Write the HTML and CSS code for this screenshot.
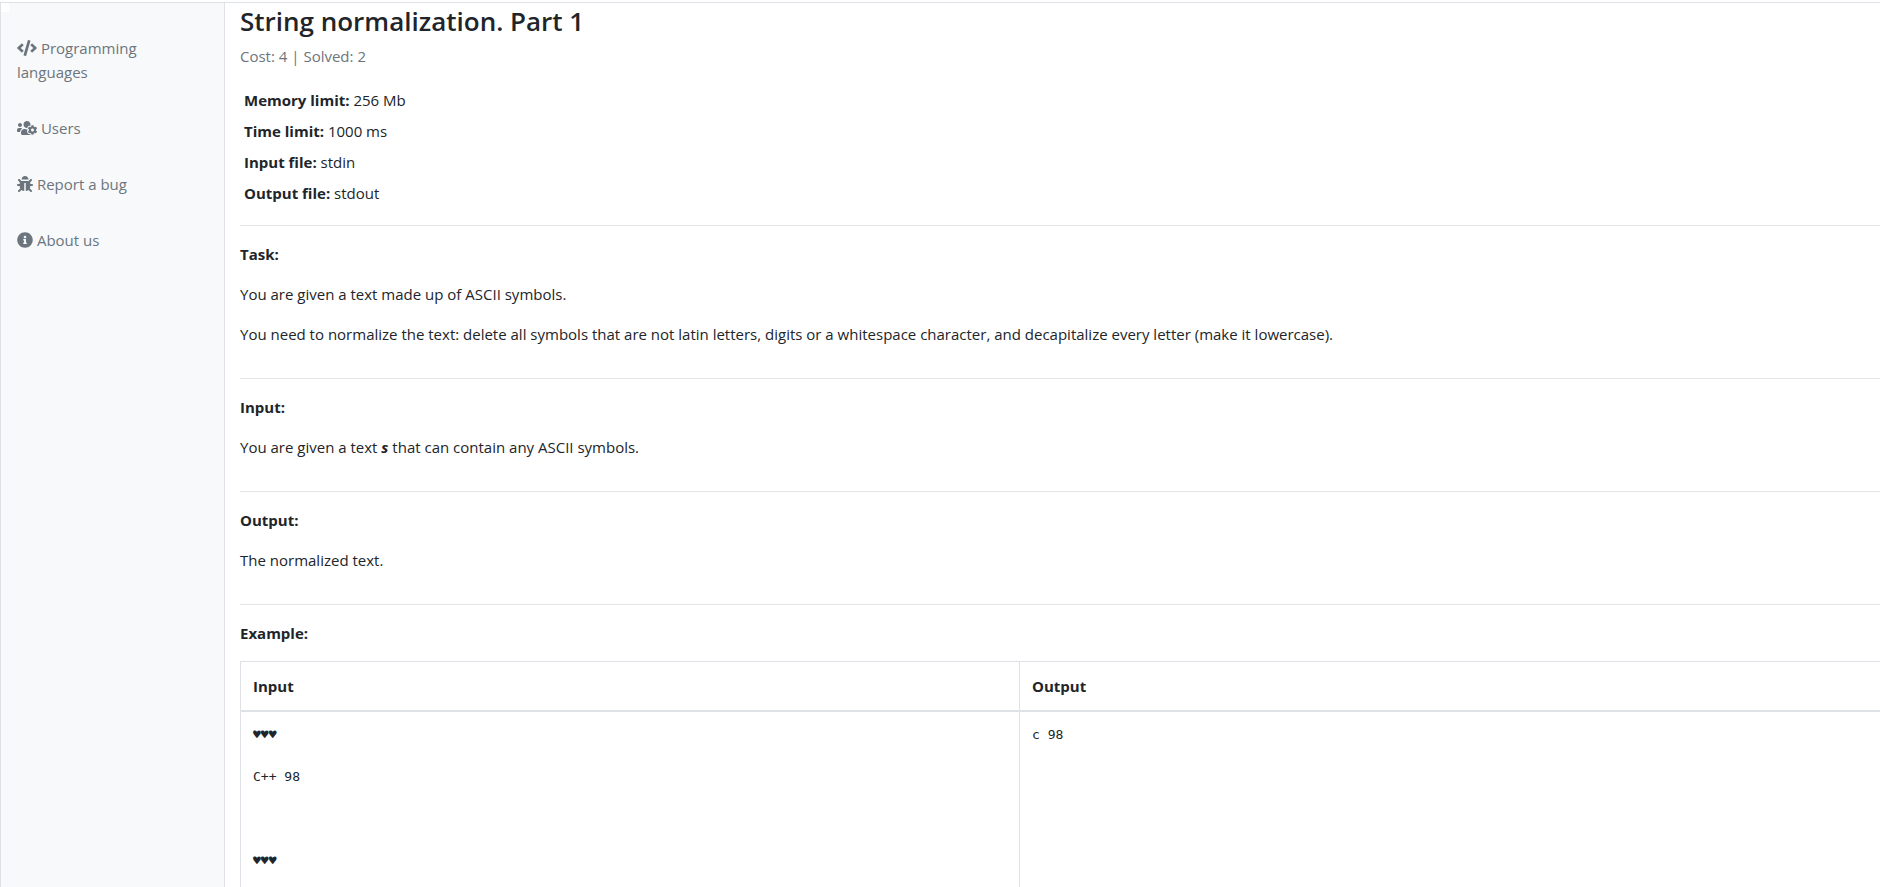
FILE: index.html
```html
<!DOCTYPE html>
<html lang="en">
<head>
    <meta charset="UTF-8">
    <title>String normalization. Part 1</title>
    <link rel="stylesheet" href="styles.css">
</head>
<body>
<div class="wrapper">
    <nav class="sidebar">
        <ul>
            <li>
                <a href="#"><svg class="icon icon-wide" viewBox="0 0 640 512"><path d="M278.9 511.5l-61-17.7c-6.4-1.8-10-8.5-8.2-14.9L346.2 8.7c1.8-6.4 8.5-10 14.9-8.2l61 17.7c6.4 1.8 10 8.5 8.2 14.9L293.8 503.3c-1.9 6.4-8.5 10.1-14.9 8.2zm-114-112.2l43.5-46.4c4.6-4.9 4.3-12.7-.8-17.2L117 256l90.6-79.7c5.1-4.5 5.5-12.3.8-17.2l-43.5-46.4c-4.5-4.8-12.1-5.1-17-.5L3.8 247.2c-5.1 4.7-5.1 12.8 0 17.5l144.1 135.1c4.9 4.6 12.5 4.4 17-.5zm327.2.6l144.1-135.1c5.1-4.7 5.1-12.8 0-17.5L492.1 112.1c-4.8-4.5-12.4-4.3-17 .5L431.6 159c-4.6 4.9-4.3 12.7.8 17.2L523 256l-90.6 79.7c-5.1 4.5-5.5 12.3-.8 17.2l43.5 46.4c4.5 4.9 12.1 5.1 17 .6z"/></svg> Programming languages</a>
            </li>
            <li>
                <a href="#"><svg class="icon icon-wide" viewBox="0 0 640 512"><path d="M610.5 341.3c2.6-14.1 2.6-28.5 0-42.6l25.8-14.9c3-1.7 4.3-5.2 3.3-8.5-6.7-21.6-18.2-41.2-33.2-57.4-2.3-2.5-6-3.1-9-1.4l-25.8 14.9c-10.9-9.3-23.4-16.5-36.9-21.3v-29.8c0-3.4-2.4-6.4-5.7-7.1-22.3-5-45-4.8-66.2 0-3.3.7-5.7 3.7-5.7 7.1v29.8c-13.5 4.8-26 12-36.9 21.3l-25.8-14.9c-2.9-1.7-6.7-1.1-9 1.4-15 16.2-26.5 35.8-33.2 57.4-1 3.3.4 6.8 3.3 8.5l25.8 14.9c-2.6 14.1-2.6 28.5 0 42.6l-25.8 14.9c-3 1.7-4.3 5.2-3.3 8.5 6.7 21.6 18.2 41.1 33.2 57.4 2.3 2.5 6 3.1 9 1.4l25.8-14.9c10.9 9.3 23.4 16.5 36.9 21.3v29.8c0 3.4 2.4 6.4 5.7 7.1 22.3 5 45 4.8 66.2 0 3.3-.7 5.7-3.7 5.7-7.1v-29.8c13.5-4.8 26-12 36.9-21.3l25.8 14.9c2.9 1.7 6.7 1.1 9-1.4 15-16.2 26.5-35.8 33.2-57.4 1-3.3-.4-6.8-3.3-8.5l-25.8-14.9zM496 368.5c-26.8 0-48.5-21.8-48.5-48.5s21.8-48.5 48.5-48.5 48.5 21.8 48.5 48.5-21.7 48.5-48.5 48.5zM96 224c35.3 0 64-28.7 64-64s-28.7-64-64-64-64 28.7-64 64 28.7 64 64 64zm224 32c1.9 0 3.7-.5 5.6-.6 8.3-21.7 20.5-42.1 36.3-59.2 7.4-8 17.9-12.6 28.9-12.6 6.9 0 13.7 1.8 19.6 5.3l7.9 4.6c.8-.5 1.6-.9 2.4-1.4 7-14.6 11.2-30.8 11.2-48 0-61.9-50.1-112-112-112S208 82.1 208 144c0 61.9 50.1 112 112 112zm105.2 194.5c-2.3-1.2-4.6-2.6-6.8-3.9-8.2 4.8-15.3 9.8-27.5 9.8-10.9 0-21.4-4.6-28.9-12.6-18.3-19.8-32.3-43.9-40.2-69.6-10.7-34.5 24.9-49.7 25.8-50.3-.1-2.6-.1-5.2 0-7.8l-7.9-4.6c-3.8-2.2-7-5-9.8-8.1-3.3.2-6.5.6-9.8.6-24.6 0-47.6-6-68.5-16h-8.3C179.6 288 128 339.6 128 403.2V432c0 26.5 21.5 48 48 48h255.4c-3.7-6-6.2-12.8-6.2-20.3v-9.2zM173.1 274.6C161.5 263.1 145.6 256 128 256H64c-35.3 0-64 28.7-64 64v32c0 17.7 14.3 32 32 32h65.9c6.3-47.4 34.9-87.3 75.2-109.4z"/></svg> Users</a>
            </li>
            <li>
                <a href="#"><svg class="icon" viewBox="0 0 512 512"><path d="M511.988 288.9c-.478 17.43-15.217 31.1-32.653 31.1H424v16c0 21.864-4.882 42.584-13.6 61.145l60.228 60.228c12.496 12.497 12.496 32.758 0 45.255-12.498 12.497-32.759 12.496-45.256 0l-54.736-54.736C345.886 467.965 314.351 480 280 480V236c0-6.627-5.373-12-12-12h-24c-6.627 0-12 5.373-12 12v244c-34.351 0-65.886-12.035-90.636-32.108l-54.736 54.736c-12.498 12.497-32.759 12.496-45.256 0-12.496-12.497-12.496-32.758 0-45.255l60.228-60.228C92.882 378.584 88 357.864 88 336v-16H32.666C15.23 320 .491 306.33.013 288.9-.484 270.816 14.028 256 32 256h56v-58.745l-46.628-46.628c-12.496-12.497-12.496-32.758 0-45.255 12.498-12.497 32.758-12.497 45.256 0L141.255 160h229.489l54.627-54.627c12.498-12.497 32.758-12.497 45.256 0 12.496 12.497 12.496 32.758 0 45.255L424 197.255V256h56c17.972 0 32.484 14.816 31.988 32.9zM257 0c-61.856 0-112 50.144-112 112h224C369 50.144 318.856 0 257 0z"/></svg> Report a bug</a>
            </li>
            <li>
                <a href="#"><svg class="icon" viewBox="0 0 512 512"><path d="M256 8C119.043 8 8 119.083 8 256c0 136.997 111.043 248 248 248s248-111.003 248-248C504 119.083 392.957 8 256 8zm0 110c23.196 0 42 18.804 42 42s-18.804 42-42 42-42-18.804-42-42 18.804-42 42-42zm56 254c0 6.627-5.373 12-12 12h-88c-6.627 0-12-5.373-12-12v-24c0-6.627 5.373-12 12-12h12v-64h-12c-6.627 0-12-5.373-12-12v-24c0-6.627 5.373-12 12-12h64c6.627 0 12 5.373 12 12v100h12c6.627 0 12 5.373 12 12v24z"/></svg> About us</a>
            </li>
        </ul>
    </nav>
    <main class="content">
        <h3>String normalization. Part 1</h3>
        <p class="text-muted">Cost: 4 | Solved: 2</p>
        <table class="limits">
            <tr><td><b>Memory limit:</b> 256 Mb</td></tr>
            <tr><td><b>Time limit:</b> 1000 ms</td></tr>
            <tr><td><b>Input file:</b> stdin</td></tr>
            <tr><td><b>Output file:</b> stdout</td></tr>
        </table>
        <section>
            <p><b>Task:</b></p>
            <p>You are given a text made up of ASCII symbols.</p>
            <p>You need to normalize the text: delete all symbols that are not latin letters, digits or a whitespace character, and decapitalize every letter (make it lowercase).</p>
        </section>
        <section>
            <p><b>Input:</b></p>
            <p>You are given a text <b><i>s</i></b> that can contain any ASCII symbols.</p>
        </section>
        <section>
            <p><b>Output:</b></p>
            <p>The normalized text.</p>
        </section>
        <section>
            <p><b>Example:</b></p>
            <table class="example">
                <thead>
                <tr>
                    <th class="col-input">Input</th>
                    <th>Output</th>
                </tr>
                </thead>
                <tbody>
                <tr>
                    <td><pre>♥♥♥

C++ 98



♥♥♥

</pre></td>
                    <td><pre>c 98</pre></td>
                </tr>
                </tbody>
            </table>
        </section>
    </main>
</div>
</body>
</html>
```
FILE: styles.css
```css
*{
    box-sizing: border-box;
}
body{
    margin: 0;
    padding-top: 2px;
    font-family: "Segoe UI", "Open Sans", "Noto Sans", sans-serif;
    font-size: 15px;
    line-height: 24px;
    color: #212529;
    background-color: #fff;
}
.wrapper{
    display: flex;
    min-height: 100vh;
    border-top: 1px solid #dee2e6;
    border-left: 1px solid #dee2e6;
}
/* sidebar */
.sidebar{
    position: relative;
    flex: 0 0 224px;
    padding: 17px 16px;
    background-color: #f8f9fa;
    border-right: 1px solid #dee2e6;
}
.sidebar::before{
    content: "";
    position: absolute;
    top: 0;
    left: 0;
    width: 8px;
    height: 9px;
    background-color: #fff;
}
.sidebar ul{
    margin: 0;
    padding: 0;
    list-style: none;
}
.sidebar a{
    display: block;
    padding: 16px 0;
    color: #6c757d;
    text-decoration: none;
}
.icon{
    width: 16px;
    height: 16px;
    vertical-align: -2px;
    fill: currentColor;
}
.icon-wide{
    width: 20px;
}
/* problem */
.content{
    flex: 1;
    min-width: 0;
    padding-left: 15px;
}
h3{
    margin: 0 0 5px;
    font-size: 26px;
    font-weight: 600;
    line-height: 36px;
}
p{
    margin: 0 0 16px;
}
.text-muted{
    color: #6c757d;
}
table{
    border-collapse: collapse;
}
.limits{
    margin-bottom: 17px;
}
.limits td{
    padding: 4px 4px 3px;
}
section{
    padding: 16px 0;
    border-top: 1px solid #e5e5e5;
}
.example{
    width: 100%;
    border-top: 1px solid #dee2e6;
    border-left: 1px solid #dee2e6;
}
.example th,
.example td{
    padding: 12px;
    text-align: left;
    vertical-align: top;
}
.example th{
    border-bottom: 2px solid #dee2e6;
}
.example th:first-child,
.example td:first-child{
    border-right: 1px solid #dee2e6;
}
.col-input{
    width: 779px;
}
pre{
    margin: 0;
    font-family: Consolas, "DejaVu Sans Mono", monospace;
    font-size: 13px;
    line-height: 21px;
}
```
